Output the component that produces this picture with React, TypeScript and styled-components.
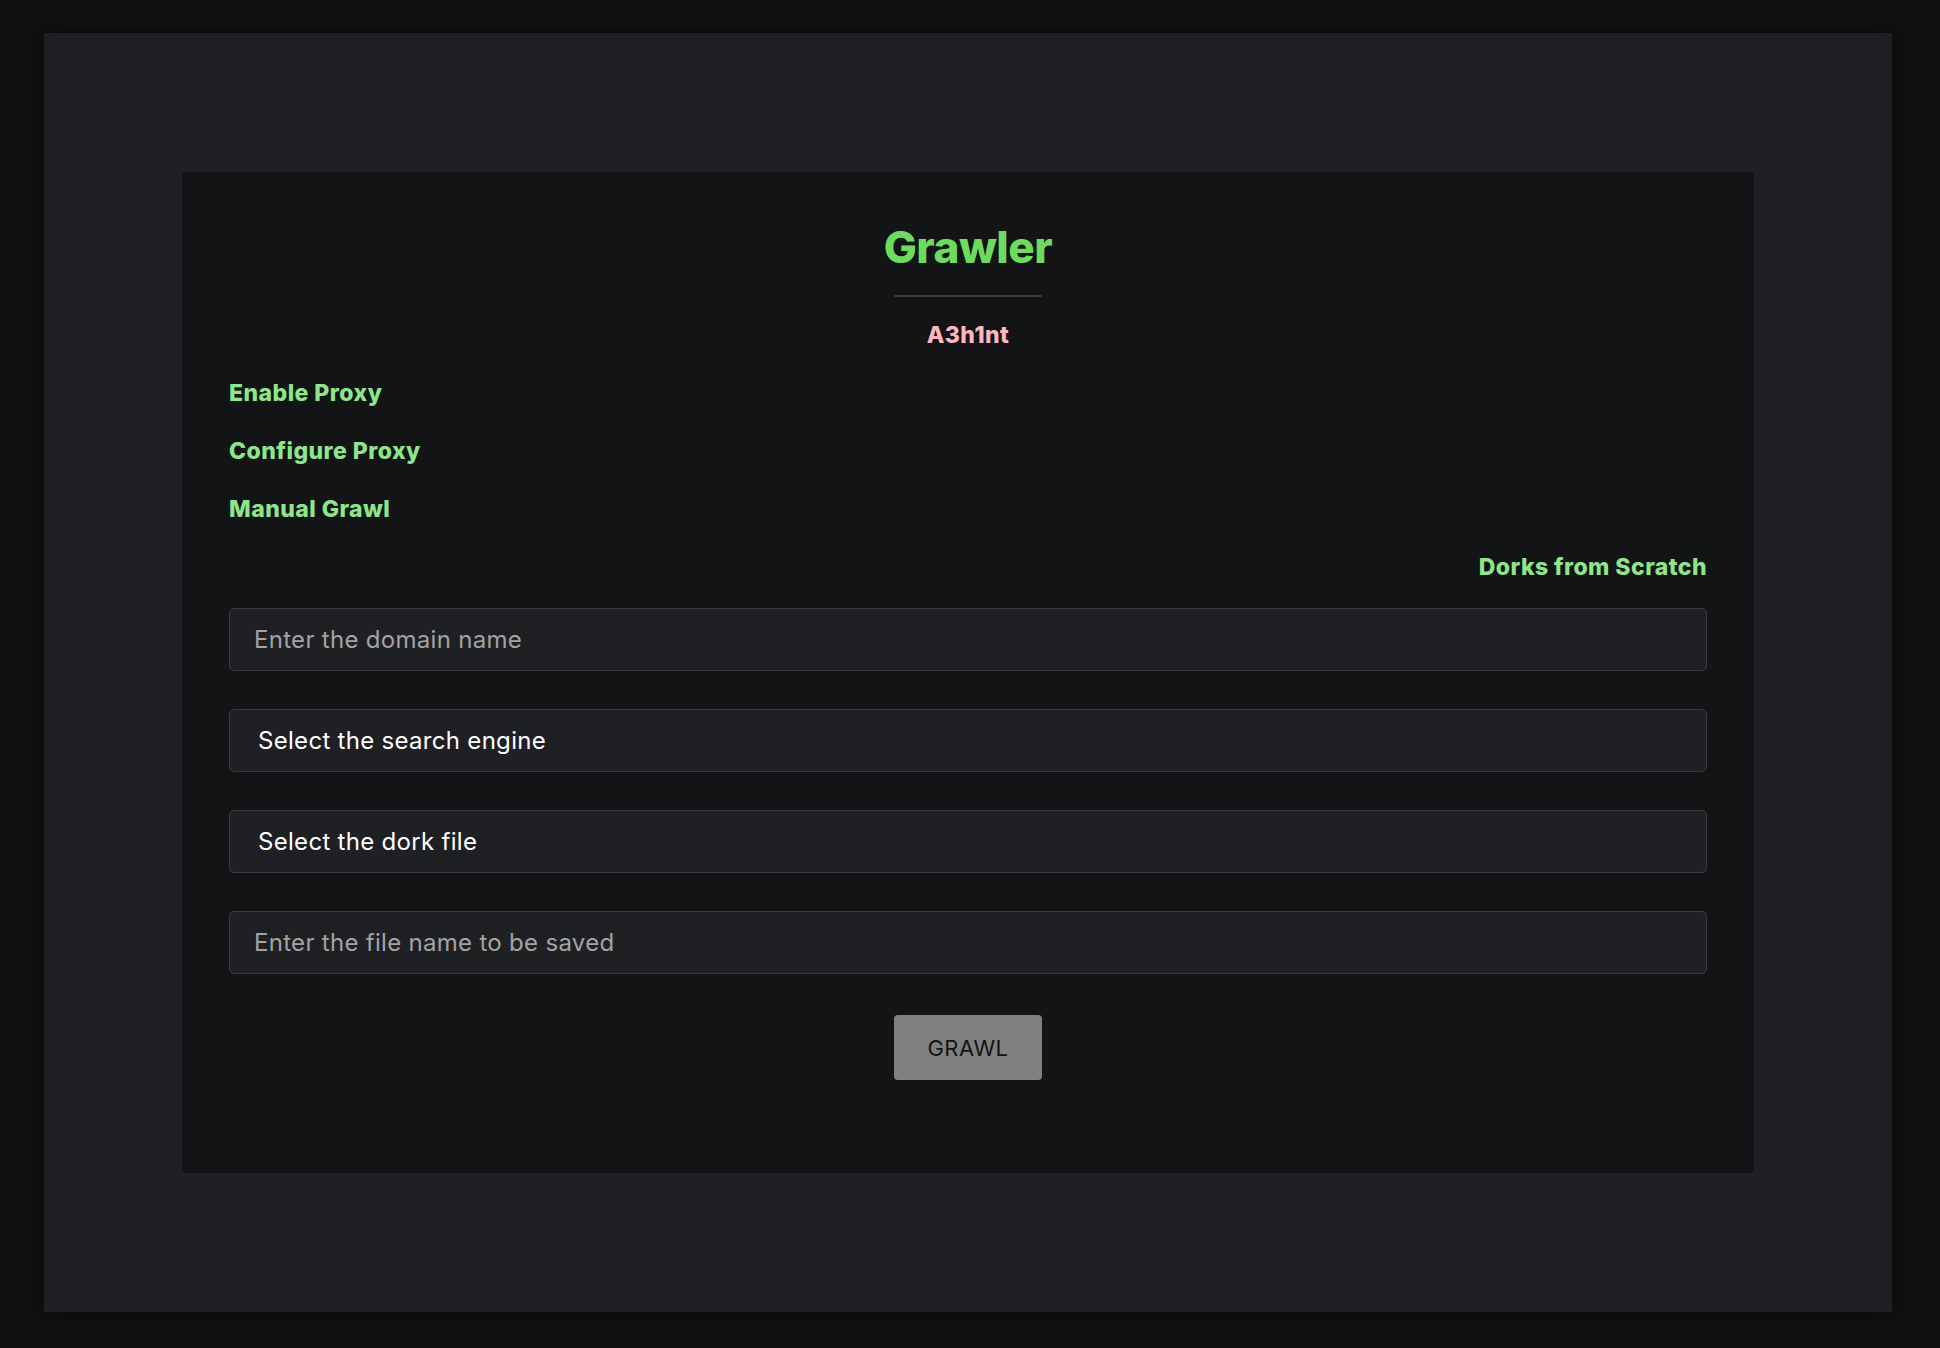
import styled, { createGlobalStyle } from 'styled-components';

const GlobalStyle = createGlobalStyle`
  body {
    margin: 0;
    background-color: #111112;
    font-family: Inter, "Open Sans", sans-serif;
  }
`;

const App = () => {
  return (
    <>
      <GlobalStyle />
      <Frame>
        <Card>
          <Title>Grawler</Title>
          <Divider />
          <Author>A3h1nt</Author>
          <NavLink>Enable Proxy</NavLink>
          <NavLink>Configure Proxy</NavLink>
          <NavLink>Manual Grawl</NavLink>
          <NavLink $right>Dorks from Scratch</NavLink>
          <Form onSubmit={(e) => e.preventDefault()}>
            <TextInput type="text" placeholder="Enter the domain name" />
            <Select defaultValue="">
              <option value="" disabled>
                Select the search engine
              </option>
              <option value="google">Google</option>
              <option value="bing">Bing</option>
              <option value="yahoo">Yahoo</option>
            </Select>
            <Select defaultValue="">
              <option value="" disabled>
                Select the dork file
              </option>
              <option value="sqli">sqli.txt</option>
              <option value="files">files.txt</option>
            </Select>
            <TextInput type="text" placeholder="Enter the file name to be saved" />
            <GrawlBtn type="submit">GRAWL</GrawlBtn>
          </Form>
        </Card>
      </Frame>
    </>
  );
};

export default App;

const Frame = styled.div`
  margin: 33px 48px 36px 44px;
  padding: 139px 138px;
  background-color: #1f2024;
  box-shadow: 0 0 18px rgba(0, 0, 0, 0.6);
`;

const Card = styled.div`
  background-color: #131416;
  border-radius: 4px 4px 0 0;
  padding: 47px 47px 93px;
  display: flex;
  flex-direction: column;
`;

const Title = styled.h1`
  margin: 0;
  text-align: center;
  font-size: 44px;
  line-height: 56px;
  font-weight: 800;
  color: #6ddc5e;
  letter-spacing: -0.5px;
`;

const Divider = styled.hr`
  width: 148px;
  height: 2px;
  margin: 20px auto 0;
  border: none;
  background-color: #3a3b3e;
`;

const Author = styled.div`
  margin-top: 22px;
  text-align: center;
  font-size: 23px;
  line-height: 32px;
  font-weight: 800;
  letter-spacing: 0.4px;
  color: #ffb6c1;
`;

const NavLink = styled.a<{ $right?: boolean }>`
  display: block;
  margin-top: 26px;
  text-align: ${(p) => (p.$right ? 'right' : 'left')};
  font-size: 23px;
  line-height: 32px;
  font-weight: 800;
  letter-spacing: 0.45px;
  color: #8ee68a;
  cursor: pointer;
`;

const Form = styled.form`
  display: flex;
  flex-direction: column;
  gap: 38px;
  margin-top: 25px;
`;

const fieldBase = `
  box-sizing: border-box;
  width: 100%;
  height: 63px;
  background-color: #1f2024;
  border: 1px solid #3a3b3f;
  border-radius: 5px;
  font-family: Inter, "Open Sans", sans-serif;
  font-size: 24px;
  letter-spacing: 0.3px;
  outline: none;
`;

const TextInput = styled.input`
  ${fieldBase}
  padding: 0 24px;
  color: #e8e8e8;
  &::placeholder {
    color: #a3a3a3;
  }
`;

const Select = styled.select`
  ${fieldBase}
  padding: 0 28px;
  color: #ffffff;
  appearance: none;
  -webkit-appearance: none;
`;

const GrawlBtn = styled.button`
  align-self: center;
  width: 148px;
  height: 65px;
  margin-top: 3px;
  background-color: #808080;
  border: none;
  border-radius: 4px;
  color: #141414;
  font-family: Inter, "Open Sans", sans-serif;
  font-size: 22px;
  letter-spacing: 0.5px;
  cursor: pointer;
`;
